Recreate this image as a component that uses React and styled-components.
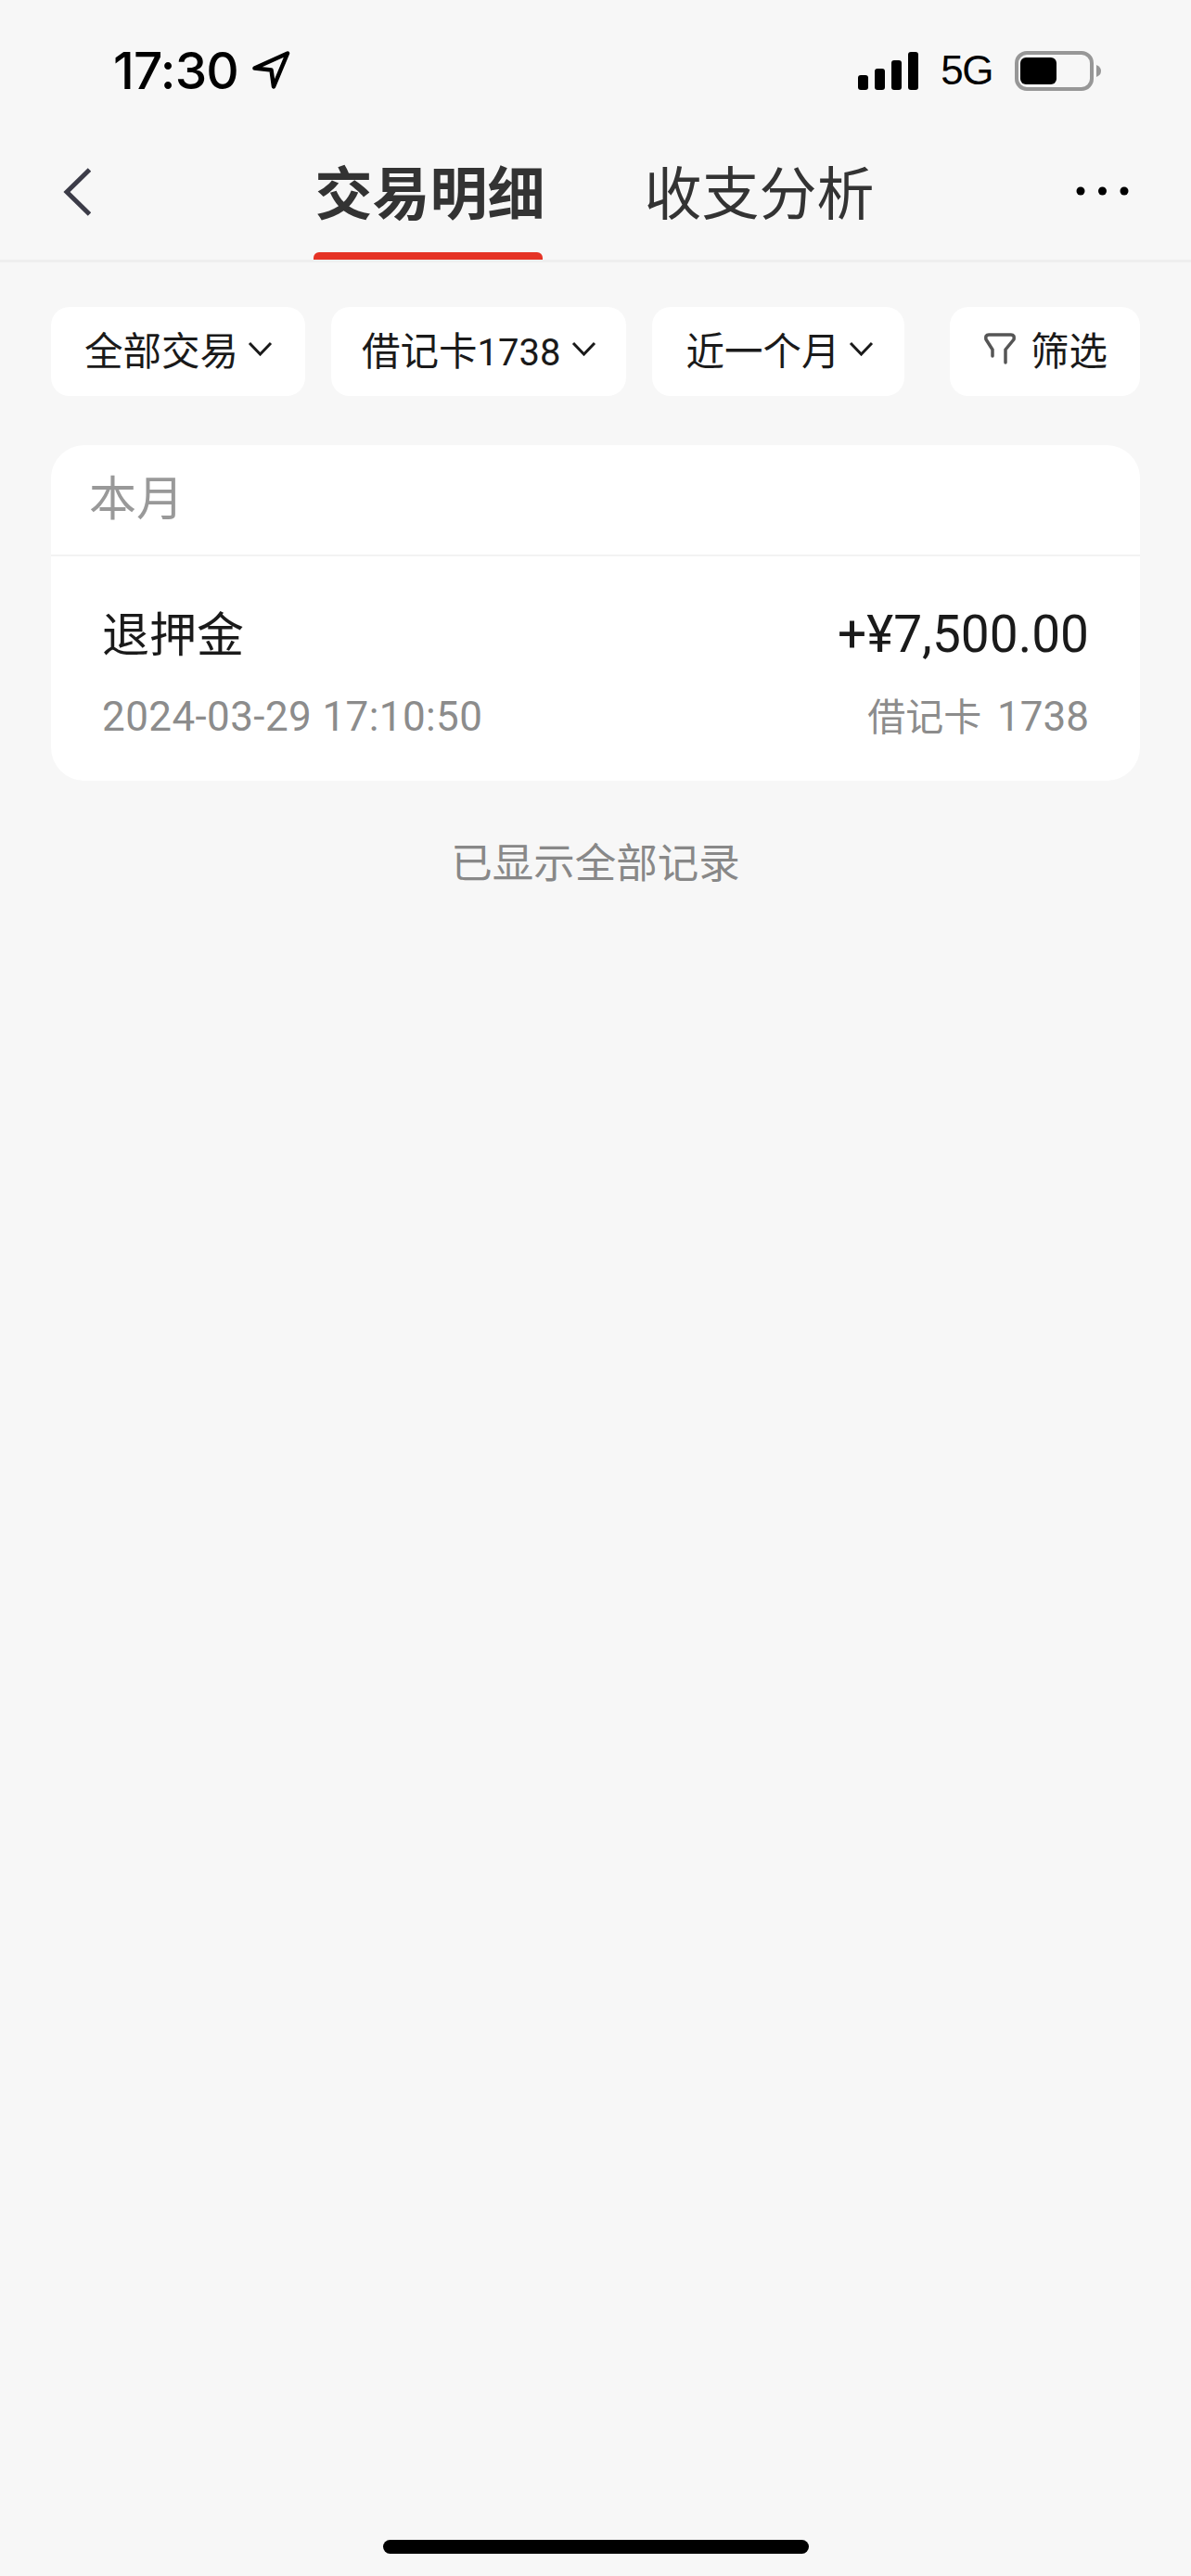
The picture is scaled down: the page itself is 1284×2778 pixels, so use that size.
import React from 'react';
import styled, { createGlobalStyle } from 'styled-components';

const GlobalStyle = createGlobalStyle`
  html, body {
    margin: 0;
    padding: 0;
    background: #f7f7f7;
  }
  body {
    font-family: Roboto, "Noto Sans CJK SC", sans-serif;
  }
`;

const Page = styled.div`
  width: 1284px;
  height: 2778px;
  display: flex;
  flex-direction: column;
  background: #f7f7f7;
`;

const StatusBar = styled.div`
  height: 150px;
  box-sizing: border-box;
  padding: 54px 97px 0 122px;
  display: flex;
  justify-content: space-between;
  align-items: flex-start;
`;

const StatusGroup = styled.div`
  display: flex;
  align-items: center;
  height: 44px;
  gap: ${(p) => p.$gap}px;
`;

const Time = styled.span`
  font-family: Inter, "Liberation Sans", sans-serif;
  font-size: 55px;
  font-weight: 500;
  color: #000;
  letter-spacing: -0.8px;
`;

const Net = styled.span`
  font-family: "Liberation Sans", sans-serif;
  font-size: 44px;
  letter-spacing: -1.5px;
  color: #000;
`;

const NavBar = styled.div`
  height: 133px;
  box-sizing: border-box;
  border-bottom: 3px solid #efefef;
  padding: 0 67px 0 68px;
  display: flex;
  justify-content: space-between;
  align-items: flex-start;
`;

const NavIcon = styled.div`
  display: flex;
  padding-top: ${(p) => p.$top}px;
`;

const Tabs = styled.div`
  display: flex;
  gap: 107px;
  margin-left: 24px;
`;

const Tab = styled.div`
  height: 130px;
  box-sizing: border-box;
  padding-top: 19px;
  font-size: 62px;
  line-height: 72px;
  color: #333;
  font-weight: ${(p) => (p.$active ? 700 : 400)};
  font-family: "Noto Sans CJK SC", sans-serif;
  position: relative;
  ${(p) => p.$active && `
    &::after {
      content: "";
      position: absolute;
      left: -1px;
      right: 3px;
      bottom: 0;
      height: 8px;
      background: #e53325;
      border-radius: 6px 6px 0 0;
    }
  `}
`;

const Filters = styled.div`
  display: flex;
  justify-content: space-between;
  padding: 48px 55px 0;
`;

const FilterGroup = styled.div`
  display: flex;
  gap: 28px;
`;

const Chip = styled.div`
  height: 96px;
  box-sizing: border-box;
  padding: 0 ${(p) => p.$pr}px 6px ${(p) => p.$pl}px;
  background: #fff;
  border-radius: 20px;
  display: flex;
  align-items: center;
  gap: ${(p) => p.$gap}px;
  font-size: 41.5px;
  color: #1a1a1a;
  font-family: "Noto Sans CJK SC", sans-serif;
`;

const ChipLabel = styled.span`
  white-space: nowrap;
`;

const CardNum = styled.span`
  font-family: Roboto, sans-serif;
  font-size: 40px;
`;

const Card = styled.div`
  margin: 53px 55px 0;
  background: #fff;
  border-radius: 36px;
  overflow: hidden;
`;

const CardHeader = styled.div`
  height: 120px;
  box-sizing: border-box;
  padding: 0 0 10px 41px;
  display: flex;
  align-items: center;
  border-bottom: 2px solid #f3f3f3;
  font-size: 51px;
  color: #999;
  font-family: "Noto Sans CJK SC", sans-serif;
`;

const Row = styled.div`
  height: 242px;
  box-sizing: border-box;
  padding: 44px 55px 0;
  display: flex;
  flex-direction: column;
  gap: 28px;
`;

const RowLine = styled.div`
  display: flex;
  justify-content: space-between;
  align-items: baseline;
  height: ${(p) => p.$h}px;
  color: ${(p) => p.$color};
  font-size: ${(p) => p.$size}px;
`;

const Cjk = styled.span`
  font-family: "Noto Sans CJK SC", sans-serif;
  font-size: ${(p) => p.$size}px;
  margin-right: ${(p) => p.$mr || 0}px;
`;

const Stamp = styled.span`
  letter-spacing: 0.4px;
`;

const Footer = styled.div`
  margin-top: 54px;
  text-align: center;
  font-size: 44.5px;
  line-height: 64px;
  color: #888;
  font-family: "Noto Sans CJK SC", sans-serif;
`;

const Spacer = styled.div`
  flex: 1;
`;

const HomeBar = styled.div`
  width: 459px;
  height: 15px;
  align-self: center;
  background: #000;
  border-radius: 8px;
  margin-bottom: 24px;
`;

const LocationArrow = () => (
  <svg width="42" height="42" viewBox="0 0 42 42" fill="none">
    <path d="M3.5 18.5 L39 2.5 L24 38.5 L21.5 20.5 Z" stroke="#000" strokeWidth="4.5" strokeLinejoin="round" />
  </svg>
);

const Signal = () => (
  <svg width="65" height="41" viewBox="0 0 65 41" fill="#000">
    <rect x="0" y="25" width="11" height="16" rx="3" />
    <rect x="18" y="18" width="11" height="23" rx="3" />
    <rect x="36" y="9" width="11" height="32" rx="3" />
    <rect x="54" y="0" width="11" height="41" rx="3" />
  </svg>
);

const Battery = () => (
  <svg width="93" height="43" viewBox="0 0 93 43">
    <rect x="2" y="2" width="81" height="39" rx="11" fill="none" stroke="#979797" strokeWidth="4" />
    <rect x="6" y="7" width="39" height="29" rx="6" fill="#000" />
    <path d="M88 15 Q93 17 93 21.5 Q93 26 88 28 Z" fill="#979797" />
  </svg>
);

const BackIcon = () => (
  <svg width="30" height="52" viewBox="0 0 30 52" fill="none">
    <path d="M28.5 2 L4 26 L28.5 50" stroke="#3c3c48" strokeWidth="5" />
  </svg>
);

const MoreIcon = () => (
  <svg width="57" height="10" viewBox="0 0 57 10" fill="#000">
    <circle cx="5" cy="5" r="4.5" />
    <circle cx="28.5" cy="5" r="4.5" />
    <circle cx="52" cy="5" r="4.5" />
  </svg>
);

const Chevron = () => (
  <svg width="27" height="16" viewBox="0 0 27 16" fill="none">
    <path d="M2 2 L13.5 14 L25 2" stroke="#1a1a1a" strokeWidth="3" />
  </svg>
);

const FilterIcon = () => (
  <svg width="34" height="34" viewBox="0 0 34 34" fill="none">
    <path d="M9 25 V18 L2 7 Q1 2 5 2 H29 Q33 2 32 7 L23 18 V32" stroke="#555" strokeWidth="3.5" strokeLinecap="round" />
  </svg>
);

export default function App() {
  return (
    <Page>
      <GlobalStyle />
      <StatusBar>
        <StatusGroup $gap={14}>
          <Time>17:30</Time>
          <LocationArrow />
        </StatusGroup>
        <StatusGroup $gap={24}>
          <Signal />
          <Net>5G</Net>
          <Battery />
        </StatusGroup>
      </StatusBar>
      <NavBar>
        <NavIcon $top={31}><BackIcon /></NavIcon>
        <Tabs>
          <Tab $active>交易明细</Tab>
          <Tab>收支分析</Tab>
        </Tabs>
        <NavIcon $top={51}><MoreIcon /></NavIcon>
      </NavBar>
      <Filters>
        <FilterGroup>
          <Chip $pl={36} $pr={35} $gap={10}><ChipLabel>全部交易</ChipLabel><Chevron /></Chip>
          <Chip $pl={33} $pr={32} $gap={12}><ChipLabel>借记卡<CardNum>1738</CardNum></ChipLabel><Chevron /></Chip>
          <Chip $pl={36} $pr={33} $gap={10}><ChipLabel>近一个月</ChipLabel><Chevron /></Chip>
        </FilterGroup>
        <Chip $pl={37} $pr={35} $gap={16}><FilterIcon /><ChipLabel>筛选</ChipLabel></Chip>
      </Filters>
      <Card>
        <CardHeader>本月</CardHeader>
        <Row>
          <RowLine $h={68} $size={55} $color="#1a1a1a">
            <Cjk $size={51}>退押金</Cjk>
            <span>+¥7,500.00</span>
          </RowLine>
          <RowLine $h={50} $size={44} $color="#8c8c8c">
            <Stamp>2024-03-29 17:10:50</Stamp>
            <span><Cjk $size={41} $mr={6}>借记卡</Cjk> 1738</span>
          </RowLine>
        </Row>
      </Card>
      <Footer>已显示全部记录</Footer>
      <Spacer />
      <HomeBar />
    </Page>
  );
}
